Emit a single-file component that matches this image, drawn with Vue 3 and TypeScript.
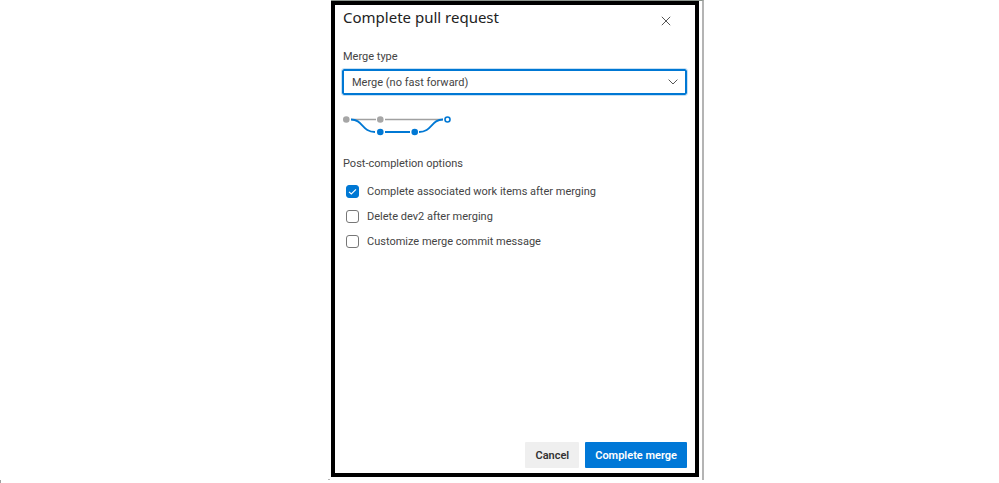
<script setup lang="ts">
import { ref } from 'vue'

interface Option {
  id: string
  label: string
  checked: boolean
}

const mergeType = ref('merge')
const options = ref<Option[]>([
  { id: 'complete-items', label: 'Complete associated work items after merging', checked: true },
  { id: 'delete-branch', label: 'Delete dev2 after merging', checked: false },
  { id: 'customize-message', label: 'Customize merge commit message', checked: false },
])
</script>

<template>
  <main class="page">
    <div class="shell">
      <form class="dialog" role="dialog" aria-labelledby="dialog-title" @submit.prevent>
        <header class="header">
          <h1 id="dialog-title">Complete pull request</h1>
          <button type="button" class="close" aria-label="Close">
            <svg width="10" height="10" viewBox="0 0 10 10" aria-hidden="true">
              <path d="M0.8 0.8L9.2 9.2M9.2 0.8L0.8 9.2" />
            </svg>
          </button>
        </header>

        <label class="label" for="merge-type">Merge type</label>
        <div class="select-wrap">
          <select id="merge-type" v-model="mergeType">
            <option value="merge">Merge (no fast forward)</option>
          </select>
          <svg class="chevron" width="10" height="6" viewBox="0 0 10 6" aria-hidden="true">
            <path d="M0.6 0.6L5 5L9.4 0.6" />
          </svg>
        </div>

        <svg class="graph" width="110" height="22" viewBox="0 0 110 22" aria-hidden="true">
          <path class="base" d="M8 5.5H33M42 5.5H100" />
          <path class="branch" d="M8 5.5C20 5.5 19 18 32 18M42 18H67M76 18C89 18 88 5.5 100 5.5" />
          <circle class="base-dot" cx="3.3" cy="5.5" r="3.3" />
          <circle class="base-dot" cx="37.3" cy="5.5" r="3.3" />
          <circle class="branch-dot" cx="37.3" cy="18" r="3.3" />
          <circle class="branch-dot" cx="71.7" cy="18" r="3.3" />
          <circle class="merge-dot" cx="104.5" cy="5.5" r="2.5" />
        </svg>

        <fieldset>
          <legend class="label">Post-completion options</legend>
          <div v-for="option in options" :key="option.id" class="option">
            <span class="box">
              <input :id="option.id" v-model="option.checked" type="checkbox" />
              <svg v-if="option.checked" width="13" height="13" viewBox="0 0 13 13" aria-hidden="true">
                <path d="M3 6.8L5.3 9L10 4.3" />
              </svg>
            </span>
            <label :for="option.id">{{ option.label }}</label>
          </div>
        </fieldset>

        <footer class="footer">
          <button type="button" class="button">Cancel</button>
          <button type="submit" class="button primary">Complete merge</button>
        </footer>
      </form>
    </div>
  </main>
</template>

<style>
body {
  margin: 0;
  background: #fff;
}
</style>

<style scoped>
* {
  box-sizing: border-box;
}

.page {
  position: relative;
  display: grid;
  grid-template-columns: 331fr 373fr 295fr;
  min-height: 100vh;
  padding-bottom: 3px;
  color: #444;
  font-family: Roboto, 'Open Sans', sans-serif;
  font-size: 11px;
  line-height: 18px;
}

.page::after {
  position: absolute;
  bottom: 0;
  left: 0;
  width: 1px;
  height: 3px;
  background: #a0a0a0;
  content: '';
}

.shell {
  position: relative;
  grid-column: 2;
  display: flex;
  padding: 0 3px 3px 0;
  border-top: 1px solid #8c948e;
  border-right: 2px solid #b4b4b4;
}

.shell::before {
  position: absolute;
  bottom: 0;
  left: -3px;
  width: 2px;
  height: 1px;
  background: #b4b4b4;
  content: '';
}

.dialog {
  display: flex;
  flex: 1;
  flex-direction: column;
  min-width: 0;
  padding: 0 8px 5px;
  border: 4px solid #000;
}

.header {
  display: flex;
  justify-content: space-between;
  padding-right: 16px;
}

h1 {
  margin: 0;
  color: #222;
  font-family: 'Noto Sans', 'Open Sans', sans-serif;
  font-size: 15px;
  font-weight: 400;
  line-height: 24px;
}

button {
  font-family: inherit;
}

.close {
  display: flex;
  align-items: center;
  justify-content: center;
  width: 10px;
  height: 32px;
  padding: 0;
  border: 0;
  background: none;
}

svg path {
  fill: none;
}

.close path,
.chevron path {
  stroke: #555;
  stroke-width: 1;
}

.header + .label {
  margin-top: 11px;
}

.select-wrap {
  display: flex;
  align-items: center;
  margin-top: 3px;
}

select {
  flex: 1;
  height: 26px;
  min-width: 0;
  margin: 0 -1px;
  padding: 2px 28px 0 8px;
  border: 2px solid #0078d4;
  border-radius: 2px;
  outline: 1px solid #c7e0f4;
  background: #fff;
  color: #444;
  font: inherit;
  appearance: none;
}

.chevron {
  margin-left: -18px;
  margin-right: 9px;
  pointer-events: none;
}

.graph {
  margin-top: 19px;
  flex: none;
}

.base {
  stroke: #a0a0a0;
  stroke-width: 1.5;
}

.branch {
  stroke: #0078d4;
  stroke-width: 1.8;
}

.base-dot {
  fill: #a6a6a6;
}

.branch-dot {
  fill: #0078d4;
}

.merge-dot {
  fill: #fff;
  stroke: #0078d4;
  stroke-width: 1.6;
}

fieldset {
  min-width: 0;
  margin: 19px 0 0;
  padding: 0;
  border: 0;
}

legend {
  padding: 0;
  margin-bottom: 6px;
}

.option {
  display: flex;
  align-items: center;
  gap: 8px;
  height: 25px;
  padding-left: 3px;
}

.box {
  display: grid;
  width: 13px;
  height: 13px;
}

.box input,
.box svg {
  grid-area: 1 / 1;
}

.box input {
  width: 13px;
  height: 13px;
  margin: 0;
  border: 1px solid #777;
  border-radius: 3px;
  background: #fff;
  appearance: none;
}

.box input:checked {
  border-color: #0078d4;
  background: #0078d4;
}

.box svg {
  z-index: 1;
  pointer-events: none;
}

.box path {
  stroke: #fff;
  stroke-width: 1.1;
}

.footer {
  display: flex;
  justify-content: flex-end;
  gap: 6px;
  margin-top: auto;
}

.button {
  height: 26px;
  padding: 0 10px;
  border: 0;
  border-radius: 1px;
  background: #efefef;
  color: #333;
  font-size: 11px;
  font-weight: 600;
}

.primary {
  background: #0078d7;
  color: #fff;
}
</style>
